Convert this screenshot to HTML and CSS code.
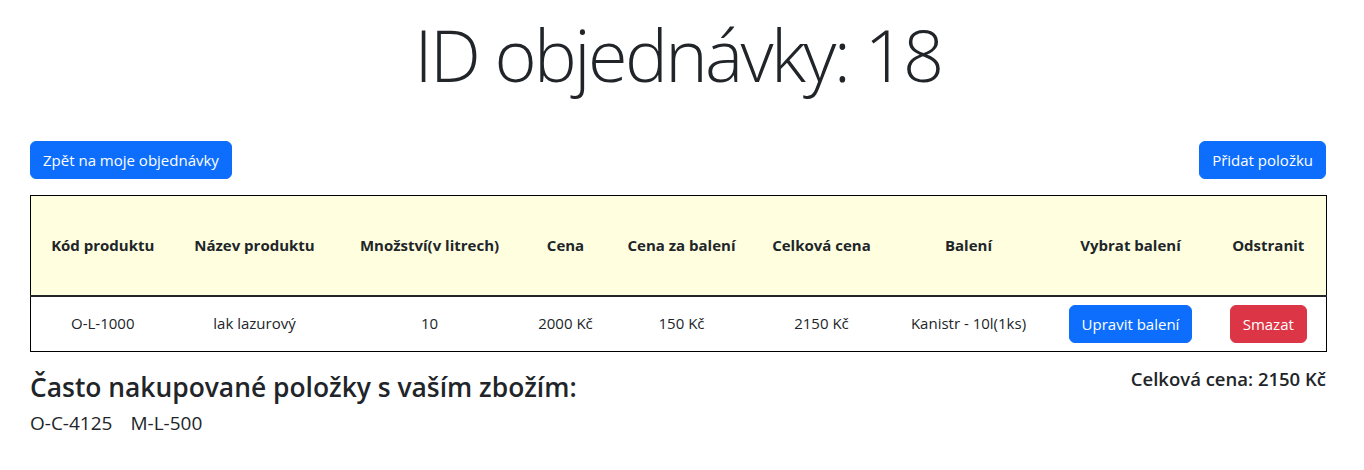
FILE: index.html
```html
<!DOCTYPE html>
<html lang="cs">
<head>
<meta charset="utf-8">
<title>ID objednávky: 18</title>
<link rel="stylesheet" href="styles.css">
</head>
<body>
<main class="page">
  <h1 class="title">ID objednávky: 18</h1>
  <div class="toolbar">
    <button class="btn btn-primary" type="button">Zpět na moje objednávky</button>
    <button class="btn btn-primary" type="button">Přidat položku</button>
  </div>
  <table class="items">
    <thead>
      <tr>
        <th class="c1">Kód produktu</th>
        <th class="c2">Název produktu</th>
        <th class="c3">Množství(v litrech)</th>
        <th class="c4">Cena</th>
        <th class="c5">Cena za balení</th>
        <th class="c6">Celková cena</th>
        <th class="c7">Balení</th>
        <th class="c8">Vybrat balení</th>
        <th class="c9">Odstranit</th>
      </tr>
    </thead>
    <tbody>
      <tr>
        <td>O-L-1000</td>
        <td>lak lazurový</td>
        <td>10</td>
        <td>2000 Kč</td>
        <td>150 Kč</td>
        <td>2150 Kč</td>
        <td>Kanistr - 10l(1ks)</td>
        <td><button class="btn btn-primary" type="button">Upravit balení</button></td>
        <td><button class="btn btn-danger" type="button">Smazat</button></td>
      </tr>
    </tbody>
  </table>
  <section class="summary">
    <div class="related">
      <h4 class="related-title">Často nakupované položky s vaším zbožím:</h4>
      <div class="codes"><span>O-C-4125</span><span>M-L-500</span></div>
    </div>
    <h5 class="total">Celková cena: 2150 Kč</h5>
  </section>
</main>
</body>
</html>
```

FILE: styles.css
```css
* { box-sizing: border-box; }

html, body {
  margin: 0;
  padding: 0;
  background: #fff;
}

body {
  font-family: "Open Sans", "Noto Sans", sans-serif;
  font-size: 15px;
  line-height: 1.5;
  color: #212529;
}

.page {
  width: 1296px;
  margin-left: 30px;
}

.title {
  margin: 11px 0 0;
  font-size: 72px;
  font-weight: 300;
  line-height: 86px;
  text-align: center;
  letter-spacing: -2.6px;
}

.toolbar {
  display: flex;
  justify-content: space-between;
  margin-top: 44px;
}

.btn {
  display: inline-block;
  font-family: inherit;
  font-size: 15px;
  line-height: 24px;
  padding: 6px 12px;
  border: 1px solid transparent;
  border-radius: 6px;
  color: #fff;
  cursor: pointer;
}

.btn-primary {
  background: #0d6efd;
  border-color: #0d6efd;
}

.btn-danger {
  background: #dc3545;
  border-color: #dc3545;
}

.btn-wide {
  letter-spacing: 0.1px;
}

.items {
  width: 1296px;
  margin-top: 16px;
  border-collapse: collapse;
  table-layout: fixed;
  border: 1px solid #000;
}

.items th {
  height: 100px;
  background: #ffffe0;
  font-weight: 700;
  text-align: center;
  vertical-align: middle;
  padding: 8px;
  border-bottom: 2px solid #212529;
}

.items td {
  text-align: center;
  vertical-align: middle;
  padding: 8px;
  height: 54px;
}

.c1 { width: 144px; }
.c2 { width: 160px; }
.c3 { width: 190px; }
.c4 { width: 82px; }
.c5 { width: 150px; }
.c6 { width: 130px; }
.c7 { width: 164px; }
.c8 { width: 160px; }
.c9 { width: 116px; }

.summary {
  display: flex;
  justify-content: space-between;
  align-items: flex-start;
  margin-top: 15px;
}

.related-title {
  margin: 5px 0 0;
  font-size: 26.4px;
  font-weight: 600;
  line-height: 30px;
}

.codes {
  display: flex;
  gap: 18px;
  margin-top: 9px;
  font-size: 19px;
  line-height: 24px;
}

.total {
  margin: 0;
  font-size: 18.5px;
  font-weight: 600;
  line-height: 24px;
}
```
